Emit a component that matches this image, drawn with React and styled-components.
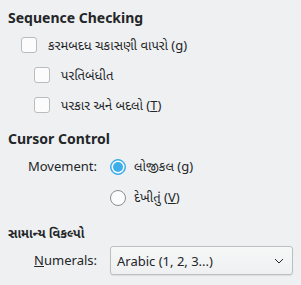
import React from "react"
import styled, { createGlobalStyle } from "styled-components"

const GlobalStyle = createGlobalStyle`
  html, body {
    margin: 0;
    padding: 0;
    background: #eff0f1;
  }
  body {
    font-family: "Noto Sans", "Noto Sans Gujarati", "DejaVu Sans", sans-serif;
    color: #232629;
    width: 301px;
    height: 285px;
    overflow: hidden;
  }
`

const Page = styled.div`
  display: flex;
  flex-direction: column;
  padding: 8px 8px 0 8px;
`

const Heading = styled.div`
  font-size: ${(p) => (p.small ? "12.5px" : "14px")};
  font-weight: bold;
  height: ${(p) => (p.small ? 16 : 20)}px;
  line-height: ${(p) => (p.small ? 16 : 20)}px;
  margin-top: ${(p) => p.top || 0}px;
`

const CheckRow = styled.label`
  display: flex;
  align-items: center;
  gap: 11px;
  height: 30px;
  margin-top: ${(p) => p.top || 0}px;
  padding-left: ${(p) => p.indent}px;
  font-size: 13px;
  line-height: 30px;
`

const Box = styled.span`
  width: 14px;
  height: 14px;
  border: 1px solid #b9bbbd;
  border-radius: 3px;
  background: #fcfcfc;
  flex: none;
`

const FormGrid = styled.div`
  display: grid;
  grid-template-columns: 89px 1fr;
  column-gap: 13px;
  align-items: center;
  margin-top: ${(p) => p.top || 0}px;
`

const FieldLabel = styled.div`
  font-size: 13px;
  text-align: right;
  height: ${(p) => p.h}px;
  line-height: ${(p) => p.h}px;
`

const RadioRow = styled.label`
  display: flex;
  align-items: center;
  gap: 8px;
  height: 31px;
  line-height: 31px;
  font-size: 13px;
`

const Radio = styled.span`
  width: 14px;
  height: 14px;
  border-radius: 50%;
  flex: none;
  border: 1px solid ${(p) => (p.checked ? "#3daee9" : "#8a8d90")};
  background: ${(p) => (p.checked ? "#3daee9" : "#fcfcfc")};
  display: flex;
  align-items: center;
  justify-content: center;
  &::after {
    content: "";
    display: ${(p) => (p.checked ? "block" : "none")};
    width: 10px;
    height: 10px;
    border-radius: 50%;
    background: #3daee9;
    box-shadow: 0 0 0 1.5px #fcfcfc;
  }
`

const Combo = styled.div`
  display: flex;
  align-items: center;
  justify-content: space-between;
  width: 183px;
  height: 29px;
  box-sizing: border-box;
  padding: 0 8px 0 6px;
  border: 1px solid #bcbebf;
  border-radius: 3px;
  background: linear-gradient(#f6f7f7, #eff0f1);
  box-shadow: 0 1px 1px rgba(0, 0, 0, 0.08);
  font-size: 13px;
`

const U = styled.span`
  text-decoration: underline;
`

const Chevron = () => (
  <svg width="10" height="6" viewBox="0 0 10 6">
    <path d="M1 1 L5 5 L9 1" fill="none" stroke="#232629" strokeWidth="1" />
  </svg>
)

export default function App() {
  return (
    <>
      <GlobalStyle />
      <Page>
        <Heading>Sequence Checking</Heading>
        <CheckRow indent={13} top={2}>
          <Box />
          <span>કરમબદધ ચકાસણી વાપરો (<U>g</U>)</span>
        </CheckRow>
        <CheckRow indent={26}>
          <Box />
          <span>પરતિબંધીત</span>
        </CheckRow>
        <CheckRow indent={26}>
          <Box />
          <span>પરકાર અને બદલો (<U>T</U>)</span>
        </CheckRow>
        <Heading top={9}>Cursor Control</Heading>
        <FormGrid top={2}>
          <FieldLabel h={31}>Movement:</FieldLabel>
          <RadioRow>
            <Radio checked />
            <span>લોજીકલ (<U>g</U>)</span>
          </RadioRow>
          <div />
          <RadioRow>
            <Radio />
            <span>દેખીતું (<U>V</U>)</span>
          </RadioRow>
        </FormGrid>
        <Heading small top={13}>સામાન્ય વિકલ્પો</Heading>
        <FormGrid top={4}>
          <FieldLabel h={29}>
            <U>N</U>umerals:
          </FieldLabel>
          <Combo>
            <span>Arabic (1, 2, 3...)</span>
            <Chevron />
          </Combo>
        </FormGrid>
      </Page>
    </>
  )
}
